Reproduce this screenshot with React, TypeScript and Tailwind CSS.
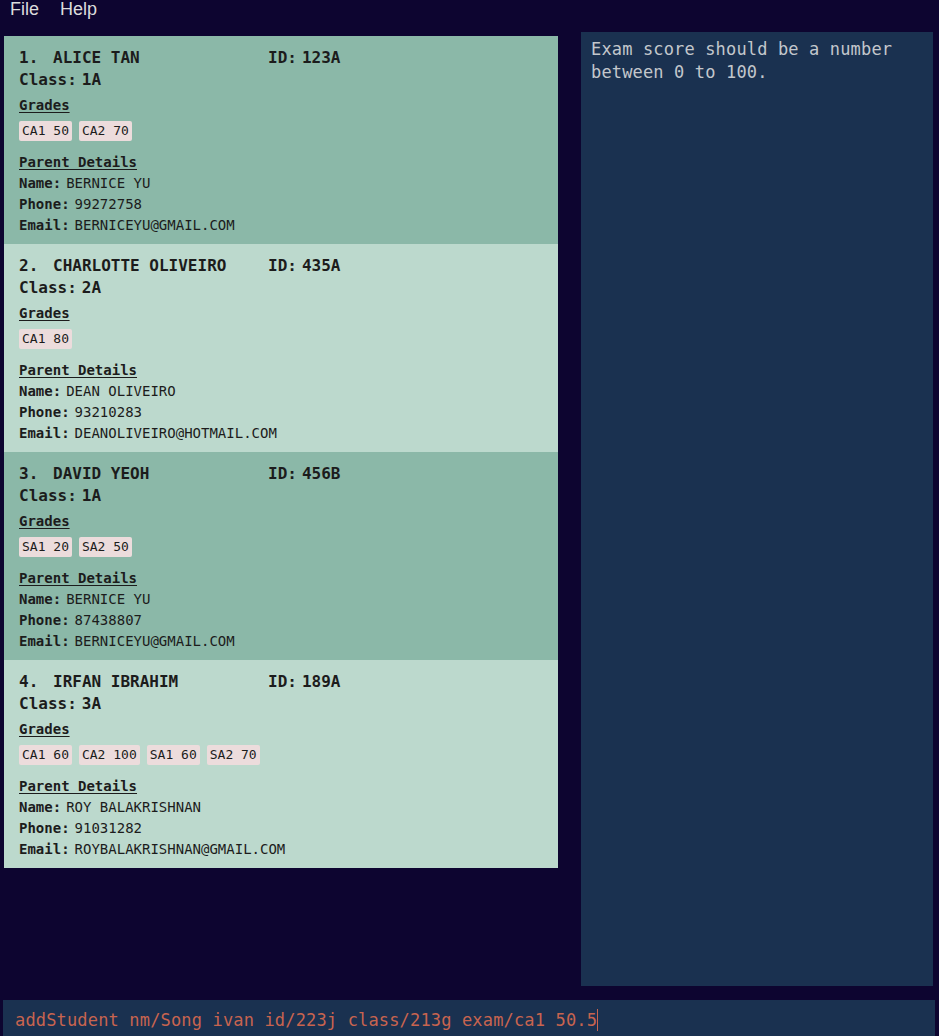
import React from "react";

interface Student {
  name: string;
  id: string;
  cls: string;
  grades: string[];
  parentName: string;
  phone: string;
  email: string;
}

const students: Student[] = [
  {
    name: "ALICE TAN",
    id: "123A",
    cls: "1A",
    grades: ["CA1 50", "CA2 70"],
    parentName: "BERNICE YU",
    phone: "99272758",
    email: "BERNICEYU@GMAIL.COM",
  },
  {
    name: "CHARLOTTE OLIVEIRO",
    id: "435A",
    cls: "2A",
    grades: ["CA1 80"],
    parentName: "DEAN OLIVEIRO",
    phone: "93210283",
    email: "DEANOLIVEIRO@HOTMAIL.COM",
  },
  {
    name: "DAVID YEOH",
    id: "456B",
    cls: "1A",
    grades: ["SA1 20", "SA2 50"],
    parentName: "BERNICE YU",
    phone: "87438807",
    email: "BERNICEYU@GMAIL.COM",
  },
  {
    name: "IRFAN IBRAHIM",
    id: "189A",
    cls: "3A",
    grades: ["CA1 60", "CA2 100", "SA1 60", "SA2 70"],
    parentName: "ROY BALAKRISHNAN",
    phone: "91031282",
    email: "ROYBALAKRISHNAN@GMAIL.COM",
  },
];

const mono = "font-['DejaVu_Sans_Mono','Liberation_Mono',monospace]";

const StudentCard: React.FC<{ s: Student; index: number }> = ({ s, index }) => {
  const bg = index % 2 === 0 ? "bg-[#8bb8a8]" : "bg-[#bcd9cd]";
  return (
    <div className={`${bg} h-[208px] px-[15px] pt-[11px] text-[#1c1c1c] ${mono}`}>
      {/* name + id row */}
      <div className="flex text-[16px] leading-[22px] font-bold">
        <span className="w-[34px]">{index + 1}.</span>
        <span className="w-[215px]">{s.name}</span>
        <span className="flex gap-[5px]">
          <span>ID:</span>
          <span>{s.id}</span>
        </span>
      </div>
      <div className="flex gap-[5px] text-[16px] leading-[22px] font-bold">
        <span>Class:</span>
        <span>{s.cls}</span>
      </div>

      {/* grades */}
      <div className="mt-[4px] text-[14px] leading-[20px] font-bold underline underline-offset-2">
        Grades
      </div>
      <div className="mt-[6px] flex gap-[7px]">
        {s.grades.map((g) => (
          <span
            key={g}
            className="bg-[#ecdcdc] rounded-[2px] px-[3px] h-[20px] text-[13px] leading-[20px]"
          >
            {g}
          </span>
        ))}
      </div>

      {/* parent details */}
      <div className="mt-[11px] text-[14px] leading-[21px] font-bold underline underline-offset-2">
        Parent Details
      </div>
      <div className="text-[14px] leading-[21px]">
        <div className="flex gap-[5px]">
          <span className="font-bold">Name:</span>
          <span>{s.parentName}</span>
        </div>
        <div className="flex gap-[5px]">
          <span className="font-bold">Phone:</span>
          <span>{s.phone}</span>
        </div>
        <div className="flex gap-[5px]">
          <span className="font-bold">Email:</span>
          <span>{s.email}</span>
        </div>
      </div>
    </div>
  );
};

const App: React.FC = () => {
  return (
    <div className="h-[1036px] w-full overflow-hidden bg-[#0d0530] flex flex-col">
      {/* Menu bar */}
      <div className="h-[32px] flex items-start gap-[21px] pl-[10px] text-[18px] leading-[18px] text-[#dcdcdc] font-['Liberation_Sans',Arial,sans-serif]">
        <span>File</span>
        <span>Help</span>
      </div>

      {/* Main area */}
      <div className="flex-1 flex pb-[14px]">
        {/* Student list */}
        <div className="w-[554px] ml-[4px] mt-[4px] flex flex-col self-start">
          {students.map((s, i) => (
            <StudentCard key={s.id} s={s} index={i} />
          ))}
        </div>

        {/* Result display */}
        <div
          className={`ml-[23px] w-[352px] bg-[#1a3150] px-[10px] pt-[6px] text-[17px] leading-[23px] tracking-[0.15px] text-[#c3c7cc] ${mono}`}
        >
          Exam score should be a number between 0 to 100.
        </div>
      </div>

      {/* Command box */}
      <div className="mx-[3px] w-[932px] h-[36px] bg-[#1a3150] flex items-center pl-[12px] pt-[4px]">
        <span className={`text-[17px] leading-[22px] tracking-[0.16px] text-[#c8644f] ${mono}`}>
          addStudent nm/Song ivan id/223j class/213g exam/ca1 50.5
        </span>
        <span className="w-[1px] h-[22px] bg-[#c8644f]" />
      </div>
    </div>
  );
};

export default App;
